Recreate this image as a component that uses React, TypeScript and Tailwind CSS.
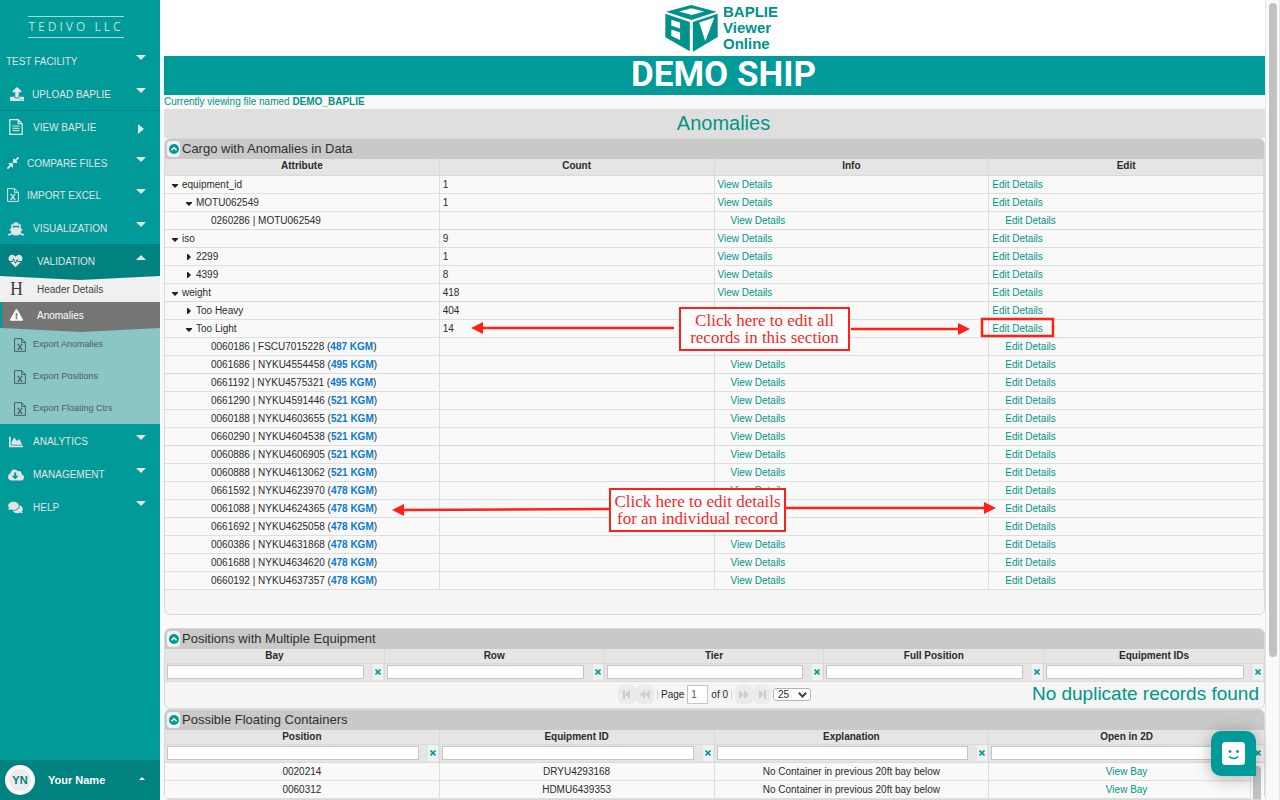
import type { ReactNode } from 'react'
import {
  FaChartArea,
  FaCloudDownloadAlt,
  FaComments,
  FaCompressAlt,
  FaExclamationTriangle,
  FaHeartbeat,
  FaShip,
  FaUpload
} from 'react-icons/fa'

type TreeRow = {
  level: 0 | 1 | 2
  label: string
  open?: boolean
  count?: string
  weight?: string
  noView?: boolean
}

const treeRows: TreeRow[] = [
  { level: 0, label: 'equipment_id', open: true, count: '1' },
  { level: 1, label: 'MOTU062549', open: true, count: '1' },
  { level: 2, label: '0260286 | MOTU062549' },
  { level: 0, label: 'iso', open: true, count: '9' },
  { level: 1, label: '2299', open: false, count: '1' },
  { level: 1, label: '4399', open: false, count: '8' },
  { level: 0, label: 'weight', open: true, count: '418' },
  { level: 1, label: 'Too Heavy', open: false, count: '404', noView: true },
  { level: 1, label: 'Too Light', open: true, count: '14', noView: true },
  { level: 2, label: '0060186 | FSCU7015228', weight: '487 KGM', noView: true },
  { level: 2, label: '0061686 | NYKU4554458', weight: '495 KGM' },
  { level: 2, label: '0661192 | NYKU4575321', weight: '495 KGM' },
  { level: 2, label: '0661290 | NYKU4591446', weight: '521 KGM' },
  { level: 2, label: '0060188 | NYKU4603655', weight: '521 KGM' },
  { level: 2, label: '0660290 | NYKU4604538', weight: '521 KGM' },
  { level: 2, label: '0060886 | NYKU4606905', weight: '521 KGM' },
  { level: 2, label: '0060888 | NYKU4613062', weight: '521 KGM' },
  { level: 2, label: '0661592 | NYKU4623970', weight: '478 KGM' },
  { level: 2, label: '0061088 | NYKU4624365', weight: '478 KGM', noView: true },
  { level: 2, label: '0661692 | NYKU4625058', weight: '478 KGM', noView: true },
  { level: 2, label: '0060386 | NYKU4631868', weight: '478 KGM' },
  { level: 2, label: '0061688 | NYKU4634620', weight: '478 KGM' },
  { level: 2, label: '0660192 | NYKU4637357', weight: '478 KGM' }
]

const floating = [
  { position: '0020214', id: 'DRYU4293168', why: 'No Container in previous 20ft bay below' },
  { position: '0060312', id: 'HDMU6439353', why: 'No Container in previous 20ft bay below' }
]

const levelPad = ['pl-[7px]', 'pl-[21px]', 'pl-[46px]']

function FileTextIcon() {
  return (
    <svg viewBox="0 0 14 16" className="w-[14px] h-4" fill="none" stroke="currentColor" strokeLinejoin="round">
      <path d="M.8.6h8.4l4 4v10.8H.8zM9.2.6v4h4" strokeWidth="1.3" />
      <path d="M3.5 7h7M3.5 9.3h7M3.5 11.6h7" />
    </svg>
  )
}

function ExcelIcon() {
  return (
    <svg viewBox="0 0 12 14" className="w-3 h-[14px]" fill="none" stroke="currentColor" strokeLinejoin="round">
      <path d="M.6.6h7l3.8 3.8v9H.6zM7.6.6v3.8h3.8" />
      <path d="M4.1 6.4l3.6 5M7.7 6.4l-3.6 5" strokeWidth="1.1" />
      <path d="M3.2 6.3h1.9M6.7 6.3h1.9M3.2 11.4h1.9M6.7 11.4h1.9" strokeWidth=".8" />
    </svg>
  )
}

function Caret({ dir }: { dir: 'up' | 'down' | 'right' }) {
  if (dir === 'right') {
    return (
      <svg viewBox="0 0 6 10" className="w-[6px] h-[10px] mr-[16px] mt-[3px]" fill="currentColor">
        <path d="M0 0l6 5-6 5z" />
      </svg>
    )
  }
  return (
    <svg viewBox="0 0 10 5" className="w-[10px] h-[5px] mr-[14px] -mt-2" fill="currentColor">
      {dir === 'down' ? <path d="M0 0h10L5 5z" /> : <path d="M0 5h10L5 0z" />}
    </svg>
  )
}

function NavItem({
  label,
  icon,
  pad = 'pl-2',
  box = 'w-[25px]',
  row = 'h-[33px] pt-[2px]',
  dir = 'down'
}: {
  label: string
  icon?: ReactNode
  pad?: string
  box?: string
  row?: string
  dir?: 'up' | 'down' | 'right'
}) {
  return (
    <button className={`w-full shrink-0 flex items-center text-left text-[10px] text-[#e3e3e3] ${row} ${pad}`}>
      {icon && <span className={`shrink-0 ${box}`}>{icon}</span>}
      <span className="flex-1 whitespace-nowrap">{label}</span>
      <Caret dir={dir} />
    </button>
  )
}

function Sidebar() {
  return (
    <nav className="w-40 shrink-0 bg-[#009a98] flex flex-col">
      <div className="h-[45px] shrink-0 pt-4 flex justify-center items-start pr-2">
        <div className="w-24 h-[22px] border-y border-[#a5dad9] flex items-center justify-center font-['Open_Sans',sans-serif] text-[12px] leading-none tracking-[3px] text-[#b8e0df] whitespace-nowrap">
          TEDIVO LLC
        </div>
      </div>
      <NavItem label="TEST FACILITY" row="h-[33px]" pad="pl-[6px]" />
      <NavItem label="UPLOAD BAPLIE" row="h-8" pad="pl-[10px]" box="w-[22px]" icon={<FaUpload className="w-[14px] h-[14px]" />} />
      <NavItem label="VIEW BAPLIE" row="h-[37px] pb-1 border-t border-[#008c8a]" pad="pl-[9px]" box="w-6" dir="right" icon={<FileTextIcon />} />
      <NavItem label="COMPARE FILES" row="h-8" pad="pl-[6px]" box="w-[21px]" icon={<FaCompressAlt className="w-[14px] h-[14px]" />} />
      <NavItem label="IMPORT EXCEL" row="h-8" pad="pl-[7px]" box="w-5" icon={<ExcelIcon />} />
      <NavItem label="VISUALIZATION" icon={<FaShip className="w-4 h-[14px]" />} />

      <div className="relative z-10 shrink-0 bg-[#008280]">
        <NavItem label="VALIDATION" row="h-8 pt-[2px]" box="w-[29px]" dir="up" icon={<FaHeartbeat className="w-[15px] h-[14px]" />} />
        <svg viewBox="0 0 160 4" preserveAspectRatio="none" className="absolute top-full left-0 w-full h-1">
          <path d="M0 0h160L80 4z" fill="#008280" />
        </svg>
      </div>
      <a href="#header" className="h-[26px] shrink-0 flex items-center bg-[#f0f0f0] text-[10px] text-[#424242] pl-[10px]">
        <span aria-hidden="true" className="w-[27px] font-['Liberation_Serif',serif] text-[18px] leading-4">H</span>
        Header Details
      </a>
      <a href="#anomalies" className="relative z-10 h-[26px] shrink-0 flex items-center bg-[#757575] border-l-2 border-[#009a98] text-[10px] text-white pl-2">
        <FaExclamationTriangle className="w-[13px] h-3 mr-[14px]" />
        Anomalies
        <svg viewBox="0 0 160 4" preserveAspectRatio="none" className="absolute top-full left-0 w-full h-1">
          <path d="M0 0h160L80 4z" fill="#757575" />
        </svg>
      </a>
      <div className="shrink-0 bg-[#8ac6c6]">
        {['Export Anomalies', 'Export Positions', 'Export Floating Ctrs'].map((t) => (
          <button key={t} className="w-full h-8 pt-[2px] flex items-center pl-[14px] text-[9px] text-[#4d5f5f]">
            <span className="w-[19px]"><ExcelIcon /></span>
            {t}
          </button>
        ))}
      </div>

      <NavItem label="ANALYTICS" icon={<FaChartArea className="w-4 h-[14px]" />} />
      <NavItem label="MANAGEMENT" icon={<FaCloudDownloadAlt className="w-4 h-[14px]" />} />
      <NavItem label="HELP" icon={<FaComments className="w-[15px] h-[13px]" />} />

      <button className="mt-auto h-10 shrink-0 bg-[#008280] flex items-center pl-[5px] text-left text-[11px] font-bold text-white">
        <span className="w-[30px] h-[30px] rounded-full border-4 border-white bg-[#ebebeb] text-[#00807e] flex items-center justify-center mr-[13px]">
          YN
        </span>
        <span className="flex-1">Your Name</span>
        <svg viewBox="0 0 6 3" className="w-[6px] h-[3px] mr-[15px] -mt-1" fill="currentColor">
          <path d="M0 3h6L3 0z" />
        </svg>
      </button>
    </nav>
  )
}

function Logo() {
  return (
    <div className="flex items-center gap-[5px] text-[#00928a]">
      <svg viewBox="201 12 156 140" className="w-[53px] h-[47px]">
        <g fill="currentColor">
          <path d="M278 12l76 20-75 25-76-25z" />
          <path d="M201 38l73 25v87l-73-42z" />
          <path d="M283 63l74-25v69l-74 44z" />
        </g>
        <g fill="#fff">
          <path d="M279 22l38 9-37 11-38-11z" />
          <path d="M219 56l26 8v18l-26-8z" />
          <path d="M219 85l26 9v22l-26-12z" />
          <path d="M302 64l45-15-27 71z" />
        </g>
      </svg>
      <div className="text-[15px] leading-4 font-bold">
        <div>BAPLIE</div>
        <div>Viewer</div>
        <div>Online</div>
      </div>
    </div>
  )
}

function Panel({ title, className = '', children }: { title: string; className?: string; children: ReactNode }) {
  return (
    <section className={`relative shrink-0 border border-[#d9d9d9] rounded-md bg-[#f5f5f5] ${className}`}>
      <h2 className="h-5 bg-[#c9c9c9] rounded-t-[5px] flex items-center pl-[2px] text-[13px] text-[#2f2f2f]">
        <button aria-label={`Collapse ${title}`} className="w-[13px] h-4 rounded bg-[#f3f3f3] flex items-center justify-center mr-[2px]">
          <svg viewBox="0 0 10 10" className="w-[10px] h-[10px]">
            <circle cx="5" cy="5" r="5" fill="#009a98" />
            <path d="M2.5 6.2L5 3.8l2.5 2.4" fill="none" stroke="#fff" strokeWidth="1.5" />
          </svg>
        </button>
        {title}
      </h2>
      {children}
    </section>
  )
}

function FilterTable({ columns, children }: { columns: string[]; children?: ReactNode }) {
  return (
    <table className="w-full table-fixed border-separate border-spacing-0 text-[10px] leading-[12px]">
      <thead className="bg-[#e5e5e5]">
        <tr>
          {columns.map((c) => (
            <th key={c} className="h-[15px] p-0 border-r border-b border-[#dadada] last:border-r-0">{c}</th>
          ))}
        </tr>
        <tr>
          {columns.map((c) => (
            <td key={c} className="h-[18px] p-0 align-top border-r border-b border-[#dadada] last:border-r-0">
              <div className="flex items-center pl-[2px] pr-px">
                <input aria-label={`Filter ${c}`} className="flex-1 min-w-0 h-[14px] px-1 bg-white border border-[#c5c5c5]" />
                <button aria-label={`Clear ${c}`} className="ml-[9px] w-[10px] h-4 bg-[#f1f1f1] flex items-center justify-center">
                  <svg viewBox="0 0 6 6" className="w-[6px] h-[6px]" stroke="#009a98" strokeWidth="1.6">
                    <path d="M.5.5l5 5M5.5.5l-5 5" />
                  </svg>
                </button>
              </div>
            </td>
          ))}
        </tr>
      </thead>
      {children}
    </table>
  )
}

function PageButton({ label, d }: { label: string; d: string }) {
  return (
    <button disabled aria-label={label} className="w-[18px] h-[19px] rounded-md bg-[#ebebeb] text-[#cdcdcd] flex items-center justify-center">
      <svg viewBox="0 0 10 9" className="w-[10px] h-[9px]" fill="currentColor">
        <path d={d} />
      </svg>
    </button>
  )
}

function Pager() {
  return (
    <div className="flex items-center text-[10px]">
      <PageButton label="First page" d="M1 0h2v9H1zM8 0v9L3 4.500z" />
      <PageButton label="Previous page" d="M5 0v9L0 4.500zM10 0v9L5 4.500z" />
      <span className="w-px h-[9px] bg-[#d5d5d5] mx-[3px]" />
      <label className="flex items-center gap-[3px]">
        Page
        <input defaultValue="1" className="w-[21px] h-[19px] px-[3px] bg-white border border-[#c5c5c5] text-[10px] text-[#555]" />
      </label>
      <span className="ml-[3px]">of 0</span>
      <span className="w-px h-[9px] bg-[#d5d5d5] mx-[3px]" />
      <PageButton label="Next page" d="M0 0v9l5-4.500zM5 0v9l5-4.500z" />
      <PageButton label="Last page" d="M7 0h2v9H7zM2 0v9l5-4.500z" />
      <span className="relative ml-[2px] h-[13px] flex">
        <select aria-label="Rows per page" className="appearance-none w-[38px] h-[13px] pl-1 bg-white border border-[#b5b5b5] rounded-[3px] text-[10px] leading-[11px]">
          <option>25</option>
        </select>
        <svg viewBox="0 0 9 6" className="absolute right-1 top-1 w-[9px] h-[6px] pointer-events-none" fill="none" stroke="#444" strokeWidth="2">
          <path d="M.8.8l3.700 3.700L8.200.8" />
        </svg>
      </span>
    </div>
  )
}

// Callouts drawn over the anomalies grid
function Annotations() {
  const box = "absolute bg-white border-2 border-[#ff2018] text-[#f5291f] text-center whitespace-nowrap font-['Liberation_Serif',serif] text-[17px] leading-[17px] h-11 flex items-center justify-center"
  return (
    <div className="absolute inset-0 pointer-events-none">
      <svg className="absolute inset-0 w-full h-full" fill="#ff2018" stroke="#ff2018">
        <path d="M509 189H317M686 190h108M444 370l-205 1M621 369h200" strokeWidth="2.500" />
        <path d="M306 189l12-6v12zM805 190l-12-6v12zM227 371l12-6v12zM831 369l-12-6v12z" stroke="none" />
        <rect x="817" y="180" width="71" height="17" fill="none" strokeWidth="2.500" />
      </svg>
      <div className={`${box} left-[514px] top-[168px] w-[171px]`}>
        Click here to edit all<br />records in this section
      </div>
      <div className={`${box} left-[444px] top-[349px] w-[177px]`}>
        Click here to edit details<br />for an individual record
      </div>
    </div>
  )
}

function AnomalyTable() {
  const cell = 'h-[18px] p-0 pl-[3px] border-r border-b border-[#dedede]'
  return (
    <table className="w-full table-fixed border-separate border-spacing-0 text-[10px] leading-[12px]">
      <thead className="bg-[#e5e5e5]">
        <tr>
          {['Attribute', 'Count', 'Info', 'Edit'].map((c) => (
            <th key={c} className="h-[17px] p-0 pb-[2px] border-r border-b border-[#dadada]">{c}</th>
          ))}
        </tr>
      </thead>
      <tbody className="bg-[#f9f9f9]">
        {treeRows.map((r) => (
          <tr key={r.label}>
            <td className={`h-[18px] p-0 border-r border-b border-[#dedede] whitespace-nowrap ${levelPad[r.level]}`}>
              {r.open !== undefined && (
                <svg viewBox="0 0 6 6" className="inline-block w-[6px] h-[6px] mr-1" fill="#222">
                  {r.open ? <path d="M0 2h6v1L3 6 0 3z" /> : <path d="M1 0h1l3 3-3 3H1z" />}
                </svg>
              )}
              {r.label}
              {r.weight && <> (<b className="text-[#0a78d1]">{r.weight}</b>)</>}
            </td>
            <td className={cell}>{r.count}</td>
            <td className={cell}>
              {!r.noView && (
                <a href="#view" className={r.level === 2 ? 'text-[#009688] ml-[13px]' : 'text-[#009688]'}>View Details</a>
              )}
            </td>
            <td className={cell}>
              <a href="#edit" className={r.level === 2 ? 'text-[#009688] ml-[13px]' : 'text-[#009688]'}>Edit Details</a>
            </td>
          </tr>
        ))}
      </tbody>
    </table>
  )
}

export default function App() {
  return (
    <div className="h-screen flex overflow-hidden bg-[#f9f9f9] font-['Liberation_Sans',Arial,sans-serif] text-[#2b2b2b]">
      <Sidebar />

      <main className="flex-1 min-w-0 flex flex-col overflow-hidden">
        <header className="h-14 shrink-0 bg-white flex items-center justify-center pl-[18px]">
          <Logo />
        </header>
        <div className="pl-1 flex flex-col">
          <h1 className="h-[39px] shrink-0 bg-[#009a98] text-white text-center pl-[18px] font-['Roboto',sans-serif] font-bold text-[35px] leading-[38px]">
            DEMO SHIP
          </h1>
          <p className="h-[14px] shrink-0 text-[10px] leading-[14px] text-[#009688]">
            Currently viewing file named <b>DEMO_BAPLIE</b>
          </p>
          <div className="h-[29px] shrink-0 bg-[#dfdfdf] text-center pl-[18px] text-[20px] leading-[29px] text-[#009688]">
            Anomalies
          </div>

          <Panel title="Cargo with Anomalies in Data" className="pb-6">
            <AnomalyTable />
            <Annotations />
          </Panel>

          <Panel title="Positions with Multiple Equipment" className="mt-[13px]">
            <FilterTable columns={['Bay', 'Row', 'Tier', 'Full Position', 'Equipment IDs']} />
            <div className="h-[26px] pb-[2px] grid grid-cols-[1fr_auto_1fr] items-center">
              <span />
              <Pager />
              <span className="text-right pr-[5px] text-[19px] leading-6 text-[#009688]">No duplicate records found</span>
            </div>
          </Panel>

          <Panel title="Possible Floating Containers">
            <FilterTable columns={['Position', 'Equipment ID', 'Explanation', 'Open in 2D']}>
              <tbody className="bg-[#f9f9f9] text-center">
                {floating.map((f) => (
                  <tr key={f.position}>
                    <td className="h-[18px] p-0 border-r border-b border-[#dedede]">{f.position}</td>
                    <td className="h-[18px] p-0 border-r border-b border-[#dedede]">{f.id}</td>
                    <td className="h-[18px] p-0 border-r border-b border-[#dedede]">{f.why}</td>
                    <td className="h-[18px] p-0 border-b border-[#dedede]">
                      <a href="#bay" className="text-[#009688]">View Bay</a>
                    </td>
                  </tr>
                ))}
              </tbody>
            </FilterTable>
            <div className="absolute right-0 bottom-0 w-[14px] h-9 bg-[#f9f9f9] border-l border-[#e2e2e2] pt-[3px] pl-[2px]">
              <div className="w-2 h-full rounded-t-full bg-[#c1c1c1]" />
            </div>
          </Panel>
        </div>
      </main>

      {/* Page scrollbar */}
      <div className="w-[15px] shrink-0 border-x border-[#e6e6e6] bg-[#fafafa] pt-[3px] flex justify-center">
        <div className="w-2 h-[82%] rounded-full bg-[#c1c1c1]" />
      </div>

      <button aria-label="Open chat" className="fixed right-6 bottom-6 w-[45px] h-[45px] rounded-[10px] rounded-br-none bg-[#009a98] shadow-[0_2px_16px_rgba(0,0,0,0.3)] flex items-center justify-center">
        <svg viewBox="0 0 23 23" className="w-[23px] h-[23px]">
          <rect width="23" height="23" rx="3.500" fill="#fff" />
          <circle cx="8" cy="9.500" r="1.400" fill="#009a98" />
          <circle cx="15.500" cy="9.500" r="1.400" fill="#009a98" />
          <path d="M7 14.500q4.700 4 9.400 0" fill="none" stroke="#009a98" strokeWidth="1.500" />
        </svg>
      </button>
    </div>
  )
}
